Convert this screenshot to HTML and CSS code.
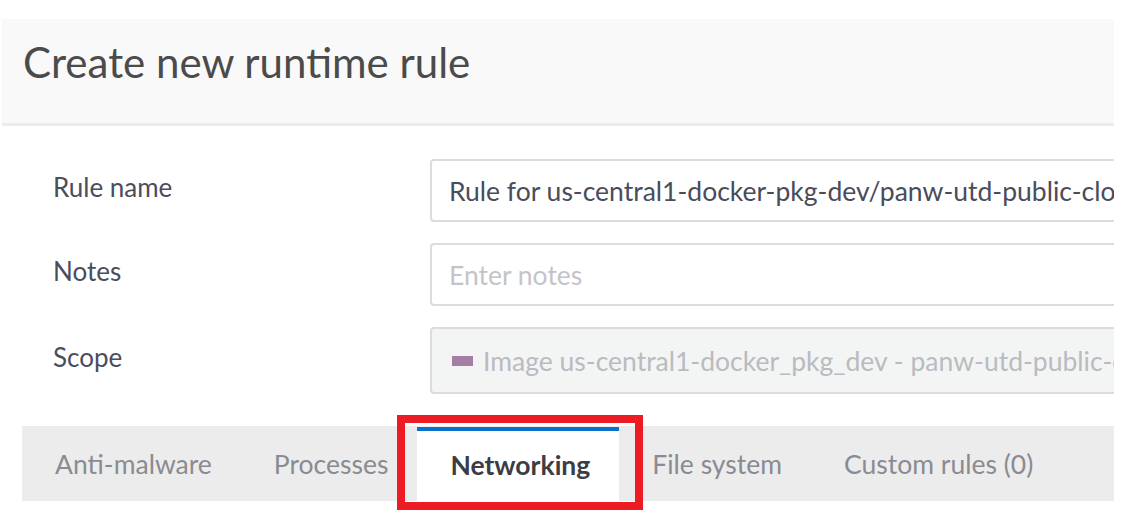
FILE: index.html
```html
<!DOCTYPE html>
<html lang="en">
<head>
<meta charset="utf-8">
<title>Create new runtime rule</title>
<link rel="stylesheet" href="styles.css">
</head>
<body>
<div class="page">
  <header class="header">
    <h1 class="title">Create new runtime rule</h1>
  </header>
  <form class="form">
    <label class="label" for="rule-name">Rule name</label>
    <div class="field"><input id="rule-name" class="input" type="text" value="Rule for us-central1-docker-pkg-dev/panw-utd-public-cloud/runtime"></div>
    <label class="label" for="notes">Notes</label>
    <div class="field"><input id="notes" class="input" type="text" placeholder="Enter notes"></div>
    <span class="label">Scope</span>
    <div class="field"><div class="input scope"><span class="swatch"></span><span class="scope-text">Image us-central1-docker_pkg_dev - panw-utd-public-cloud</span></div></div>
  </form>
  <nav class="tabs">
    <div class="tab">Anti-malware</div>
    <div class="tab">Processes</div>
    <div class="tab active">Networking<span class="highlight"></span></div>
    <div class="tab">File system</div>
    <div class="tab">Custom rules (0)</div>
  </nav>
</div>
</body>
</html>
```

FILE: styles.css
```css
html, body {
  margin: 0;
  padding: 0;
  background: #ffffff;
}

body {
  font-family: Lato, "Open Sans", "Liberation Sans", sans-serif;
}

.page {
  width: 1112px;
  margin-left: 2px;
  padding-top: 19px;
  padding-bottom: 20px;
  overflow: hidden;
}

.header {
  height: 86px;
  padding: 18px 0 0 21px;
  background: #f9f9f9;
  border-bottom: 3px solid #ececec;
}

.title {
  margin: 0;
  font-size: 42px;
  font-weight: 400;
  line-height: 1.2;
  color: #4b4b4b;
}

.form {
  display: grid;
  grid-template-columns: 377px 1fr;
  row-gap: 21px;
  align-items: center;
  margin-top: 33px;
  padding-left: 51px;
}

.label {
  font-size: 26px;
  color: #4a4d5e;
  padding-bottom: 8px;
}

.field {
  overflow: visible;
}

.input {
  box-sizing: border-box;
  display: flex;
  align-items: center;
  width: 900px;
  height: 63px;
  padding: 0 0 0 17px;
  border: 2px solid #dcdcdc;
  border-radius: 4px;
  background: #ffffff;
  font-family: Lato, "Open Sans", "Liberation Sans", sans-serif;
  font-size: 26.5px;
  color: #4a4c5a;
  outline: none;
}

.input::placeholder {
  color: #c4c4c8;
}

.scope {
  height: 67px;
  background: #f3f4f4;
  color: #b9bbc0;
  padding-left: 20px;
  white-space: nowrap;
}

.swatch {
  display: inline-block;
  flex: none;
  width: 21px;
  height: 10px;
  margin-right: 10px;
  background: #a57ea6;
}

.tabs {
  display: flex;
  height: 75px;
  margin: 32px 0 0 20px;
  background: #ececec;
}

.tab {
  position: relative;
  display: flex;
  align-items: center;
  padding: 0 29px 0 33px;
  font-size: 26.5px;
  color: #8a8b92;
  white-space: nowrap;
}

.tab.active {
  background: #ffffff;
  border-top: 4px solid #0b6fce;
  box-sizing: border-box;
  margin-top: 1px;
  font-weight: 700;
  color: #3b3d45;
  padding-bottom: 3px;
}

.highlight {
  position: absolute;
  left: -20px;
  right: -24px;
  top: -16px;
  bottom: -9px;
  border: 8px solid #ed1c24;
  pointer-events: none;
}
```
